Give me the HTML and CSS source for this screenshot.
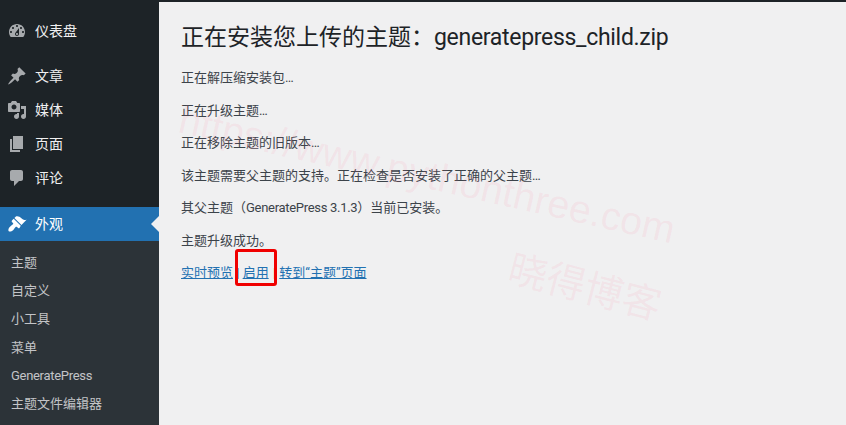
FILE: index.html
```html
<!DOCTYPE html>
<html lang="zh-CN">
<head>
<meta charset="utf-8">
<title>安装主题</title>
<link rel="stylesheet" href="styles.css">
</head>
<body>
<div class="shell">
  <nav class="sidebar">
    <ul class="menu menu-first">
      <li class="item"><svg class="icon" viewBox="0 0 20 20"><path d="M3.76 16h12.48c1.1-1.37 1.76-3.11 1.76-5 0-4.42-3.58-8-8-8s-8 3.58-8 8c0 1.89.66 3.63 1.76 5zM10 4c.55 0 1 .45 1 1s-.45 1-1 1-1-.45-1-1 .45-1 1-1zM6 6c.55 0 1 .45 1 1s-.45 1-1 1-1-.45-1-1 .45-1 1-1zm8 0c.55 0 1 .45 1 1s-.45 1-1 1-1-.45-1-1 .45-1 1-1zm-5.37 5.55L12 7v6c0 1.1-.9 2-2 2s-2-.9-2-2c0-.57.24-1.08.63-1.45zM4 10c.55 0 1 .45 1 1s-.45 1-1 1-1-.45-1-1 .45-1 1-1zm12 0c.55 0 1 .45 1 1s-.45 1-1 1-1-.45-1-1 .45-1 1-1zm-5 3c0-.55-.45-1-1-1s-1 .45-1 1 .45 1 1 1 1-.45 1-1z"/></svg><span>仪表盘</span></li>
    </ul>
    <ul class="menu menu-main">
      <li class="item"><svg class="icon" viewBox="0 0 20 20"><path d="M10.44 3.02l1.82-1.82 6.36 6.35-1.83 1.82c-1.05-.68-2.48-.57-3.41.36l-.75.75c-.92.93-1.04 2.35-.35 3.41l-1.83 1.82-2.41-2.41-2.8 2.79c-.42.42-3.38 2.71-3.8 2.29s1.86-3.39 2.28-3.81l2.79-2.79L4.1 9.36l1.83-1.82c1.05.69 2.48.57 3.4-.36l.75-.75c.93-.92 1.05-2.35.36-3.41z"/></svg><span>文章</span></li>
      <li class="item"><svg class="icon" viewBox="0 0 20 20"><path d="M13 11V4c0-.55-.45-1-1-1h-1.67L9 1H5L3.67 3H2c-.55 0-1 .45-1 1v7c0 .55.45 1 1 1h10c.55 0 1-.45 1-1zM7 4.5c1.38 0 2.5 1.12 2.5 2.5S8.38 9.5 7 9.5 4.5 8.38 4.5 7 5.62 4.5 7 4.5zM14 6h5v10.5c0 1.38-1.12 2.5-2.5 2.5S14 17.88 14 16.5s1.12-2.5 2.5-2.5c.17 0 .34.02.5.05V9h-3V6zm-4 8.05V13h2v3.5c0 1.38-1.12 2.5-2.5 2.5S7 17.88 7 16.5 8.12 14 9.5 14c.17 0 .34.02.5.05z"/></svg><span>媒体</span></li>
      <li class="item"><svg class="icon" viewBox="0 0 20 20"><path d="M6 15V2h10v13H6zm-1 1h8v2H3V5h2v11z"/></svg><span>页面</span></li>
      <li class="item"><svg class="icon" viewBox="0 0 20 20"><path d="M5 2h9c1.1 0 2 .9 2 2v7c0 1.1-.9 2-2 2h-2l-5 5v-5H5c-1.1 0-2-.9-2-2V4c0-1.1.9-2 2-2z"/></svg><span>评论</span></li>
    </ul>
    <ul class="menu menu-appearance">
      <li class="item item-current"><svg class="icon" viewBox="0 0 20 20"><path d="M14.48 11.06L7.41 3.99l1.5-1.5c.5-.56 2.3-.47 3.51.32 1.21.8 1.43 1.28 2.91 2.1 1.18.64 2.45 1.26 4.23.91zm-.71.71L6.7 4.7 4.93 6.47c-.39.39-.39 1.02 0 1.41l1.06 1.06c.39.39.39 1.03 0 1.42-.6.6-1.43 1.11-2.21 1.69-.35.26-.7.53-1.01.84-1.34 1.34-1.81 3.47-.99 4.29s2.95.35 4.29-.99c.31-.31.58-.66.84-1.01.58-.78 1.09-1.61 1.69-2.21.39-.39 1.03-.39 1.42 0l1.06 1.06c.39.39 1.02.39 1.41 0z"/></svg><span>外观</span><i class="current-arrow"></i></li>
      <li class="submenu">
        <a class="sub-item">主题</a>
        <a class="sub-item">自定义</a>
        <a class="sub-item">小工具</a>
        <a class="sub-item">菜单</a>
        <a class="sub-item"><span class="latin">GeneratePress</span></a>
        <a class="sub-item">主题文件编辑器</a>
      </li>
    </ul>
  </nav>
  <main class="content">
    <h1 class="title">正在安装您上传的主题：<span class="latin">generatepress_child.zip</span></h1>
    <p class="line">正在解压缩安装包…</p>
    <p class="line">正在升级主题…</p>
    <p class="line">正在移除主题的旧版本…</p>
    <p class="line">该主题需要父主题的支持。正在检查是否安装了正确的父主题…</p>
    <p class="line">其父主题（<span class="latin">GeneratePress 3.1.3</span>）当前已安装。</p>
    <p class="line">主题升级成功。</p>
    <p class="line"><a class="link" href="#">实时预览</a> | <a class="link link-activate" href="#">启用</a> | <a class="link" href="#">转到“主题”页面</a></p>
    <div class="highlight"></div>
    <div class="watermark watermark-url">https://www.pythonthree.com</div>
    <div class="watermark watermark-name">晓得博客</div>
  </main>
</div>
</body>
</html>
```
FILE: styles.css
```css
* { box-sizing: border-box; }
html, body { margin: 0; padding: 0; height: 100%; overflow: hidden; }
body {
  background: #f0f0f1;
  color: #3c434a;
  font-family: Roboto, "Noto Sans CJK SC", sans-serif;
  font-size: 13px;
  line-height: 1.5;
}
.shell { display: flex; height: 425px; }
.sidebar { width: 159px; flex: none; background: #1d2327; padding-top: 14px; overflow: hidden; }
.menu { list-style: none; margin: 0; padding: 0; }
.menu-main { margin-top: 11px; }
.menu-appearance { margin-top: 12px; }
.item {
  position: relative;
  display: flex;
  align-items: center;
  gap: 8px;
  height: 34px;
  padding-left: 7px;
  color: #f0f0f1;
  font-size: 14px;
}
.icon { width: 20px; height: 20px; flex: none; fill: #a7aaad; }
.item-current { background: #2271b1; color: #fff; }
.item-current .icon { fill: #fff; }
.current-arrow {
  position: absolute;
  right: 0;
  top: 9px;
  border: 8px solid transparent;
  border-left-width: 0;
  border-right-color: #f0f0f1;
}
.submenu { display: flex; flex-direction: column; background: #2c3338; padding: 8px 0 7px; }
.sub-item { height: 28.2px; line-height: 28.2px; padding-left: 11px; color: #c3c4c7; font-size: 13px; }
.latin { letter-spacing: -0.3px; }
.content {
  position: relative;
  flex: 1;
  min-width: 0;
  border-top: 2px solid #1d2327;
  padding: 0 22px;
  overflow: hidden;
}
.title {
  margin: 0;
  padding: 19px 0 0;
  height: 66px;
  font-size: 23px;
  font-weight: 400;
  line-height: 34px;
  color: #1d2327;
}
.line { margin: 0 0 13px; }
.link { color: #2271b1; text-decoration: underline; }
.link-activate { margin-right: 1px; }
.highlight {
  position: absolute;
  left: 76px;
  top: 247px;
  width: 42px;
  height: 37px;
  border: 3px solid #f00000;
  border-radius: 3px;
}
.watermark {
  position: absolute;
  color: rgba(255, 120, 150, 0.1);
  white-space: nowrap;
  pointer-events: none;
  transform-origin: 0 0;
  font-family: "Liberation Sans", "Noto Sans CJK SC", sans-serif;
  line-height: 46px;
}
.watermark-url { left: 26px; top: 94px; font-size: 39.5px; transform: rotate(12.7deg); }
.watermark-name { left: 356px; top: 244px; font-size: 39px; transform: rotate(14.5deg); }
```
